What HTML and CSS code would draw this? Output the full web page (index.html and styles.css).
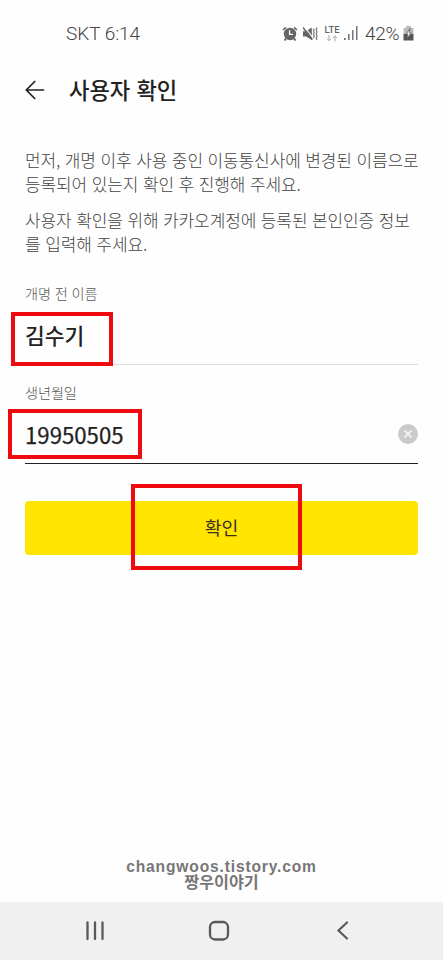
FILE: index.html
```html
<!DOCTYPE html>
<html lang="ko">
<head>
<meta charset="utf-8">
<meta name="viewport" content="width=device-width, initial-scale=1">
<title>사용자 확인</title>
<link rel="stylesheet" href="styles.css">
</head>
<body>
<div class="screen">
  <div class="status">
    <span class="carrier">SKT 6:14</span>
    <div class="indicators">
      <svg class="alarm" width="16" height="16" viewBox="0 0 16 16">
        <path d="M1 4 4 1.3M15 4 12 1.3" stroke="#666" stroke-width="1.6"/>
        <path d="M2.5 14.5 4 12.5M13.5 14.5 12 12.5" stroke="#666" stroke-width="2"/>
        <circle cx="8" cy="8" r="6.2" fill="#666"/>
        <path d="M7.6 4.3V8.4H11" fill="none" stroke="#fff" stroke-width="1.4"/>
      </svg>
      <svg class="mute" width="15" height="16" viewBox="0 0 15 16">
        <path d="M0 5.3H3L8.8 1.5V14L3 10.5H0Z" fill="#666"/>
        <path d="M1.6 1 10.5 12.6" stroke="#fff" stroke-width="1.2"/>
        <path d="M0 1.5 9.3 13.8" stroke="#666" stroke-width="1.6"/>
        <path d="M11.2 2.5 10.4 4.4 11.2 6.3 10.4 8.2 11.2 10.1 10.4 12M14 1.5 13.2 4 14 6 13.2 8 14 10 13.2 12 14 14" fill="none" stroke="#777" stroke-width="1.2"/>
      </svg>
      <div class="lte"><span>LTE</span>
        <svg width="12" height="7" viewBox="0 0 12 7" fill="none" stroke="#aaa" stroke-width="1"><path d="M3 0V5.5M1 3.5 3 5.7 5 3.5M9 6.5V1M7 3 9 .9 11 3"/></svg>
      </div>
      <svg class="signal" width="14" height="15" viewBox="0 0 14 15" fill="#777"><path d="M0 12h1.8v2H0zM4 8h1.6v6H4zM8 4h1.5v10H8zM12 0h1.5v14H12z"/></svg>
      <span class="percent">42%</span>
      <svg class="battery" width="11" height="15" viewBox="0 0 11 15"><path d="M3 0H8V2H10.5V8H.5V2H3Z" fill="#bbb"/><path d="M.5 8H10.5V14.5H.5Z" fill="#555"/><path d="M7 2.5 3 8.2H5L4 12.5 8.3 7H6.2Z" fill="#fff" stroke="#666" stroke-width=".9"/></svg>
    </div>
  </div>
  <header class="header">
    <svg width="20" height="20" viewBox="0 0 20 20" fill="none" stroke="#222" stroke-width="1.7"><path d="M19.2 10H1.5M10.2 1 1.3 10 10.2 19"/></svg>
    <h1>사용자 확인</h1>
  </header>
  <main class="content">
    <p>먼저, 개명 이후 사용 중인 이동통신사에 변경된 이름으로<br>등록되어 있는지 확인 후 진행해 주세요.</p>
    <p>사용자 확인을 위해 카카오계정에 등록된 본인인증 정보<br>를 입력해 주세요.</p>
    <div class="field">
      <div class="label">개명 전 이름</div>
      <div class="value"><span class="name">김수기</span><i class="mark mark-name"></i></div>
    </div>
    <div class="field active">
      <div class="label">생년월일</div>
      <div class="value"><span class="birth">19950505</span><i class="mark mark-birth"></i>
        <svg width="20" height="20" viewBox="0 0 20 20"><circle cx="10" cy="10" r="10" fill="#cacaca"/><path d="M6.5 6.5 13.5 13.5M13.5 6.5 6.5 13.5" stroke="#fff" stroke-width="1.3"/></svg>
      </div>
    </div>
    <div class="confirm"><span>확인</span><i class="mark mark-confirm"></i></div>
  </main>
  <div class="credit"><div class="site">changwoos.tistory.com</div><div class="author">짱우이야기</div></div>
  <nav class="navbar">
    <svg width="20" height="22" viewBox="0 0 20 22" stroke="#5a5a5a" stroke-width="2.3" stroke-linecap="round"><path d="M2.5 2.5V19M10 2.5V19M17.5 2.5V19"/></svg>
    <svg width="22" height="22" viewBox="0 0 22 22" fill="none" stroke="#5a5a5a" stroke-width="2.3"><rect x="2" y="2" width="18" height="17.5" rx="5"/></svg>
    <svg width="20" height="22" viewBox="0 0 20 22" fill="none" stroke="#5a5a5a" stroke-width="2.2" stroke-linecap="round"><path d="M14 2.5 5.5 10.5 14 18.5"/></svg>
  </nav>
</div>
</body>
</html>
```
FILE: styles.css
```css
* { box-sizing: border-box; }
body { margin: 0; background: #fefefe; font-family: "Noto Sans CJK KR", sans-serif; color: #222; }
svg { display: block; flex: none; }
.screen { height: 960px; display: flex; flex-direction: column; overflow: hidden; }
.status { height: 66px; padding: 1px 29px 0 66px; display: flex; justify-content: space-between; align-items: center; font-family: Roboto, sans-serif; font-size: 19px; font-weight: 300; color: #444; }
.carrier { letter-spacing: -.05px; }
.indicators { display: flex; align-items: center; }
.mute { margin-left: 5px; }
.lte { width: 16px; margin-left: 6px; display: flex; flex-direction: column; align-items: center; gap: 1px; font-size: 9.5px; line-height: 9px; font-weight: 500; color: #666; }
.signal { margin-left: 4px; }
.percent { width: 34px; margin-left: 7px; letter-spacing: -.3px; }
.battery { margin-left: 4px; }
.header { height: 48px; padding-left: 25px; display: flex; align-items: center; gap: 24px; }
.header h1 { margin: 0; padding-bottom: 3px; font-size: 22.2px; line-height: 32px; font-weight: 500; }
.content { padding: 34px 25px 0; }
.content p { margin: 0 0 12px; font-size: 17px; line-height: 24px; font-weight: 300; letter-spacing: -.12px; color: #444; white-space: nowrap; }
.field { height: 98px; border-bottom: 1px solid #dcdcdc; }
.content p + .field { margin-top: -1px; }
.label { padding-top: 17px; font-size: 14.2px; line-height: 20px; font-weight: 300; letter-spacing: -.1px; color: #555; }
.content p + .field .label { padding-top: 16px; }
.active { height: 99px; border-bottom-color: #222; }
.value { position: relative; height: 61px; display: flex; align-items: center; justify-content: space-between; font-weight: 500; }
.name { padding-top: 2px; font-size: 21.5px; }
.birth { padding-top: 2px; font-size: 22.2px; font-weight: 400; -webkit-text-stroke: .25px #222; }
.active .value svg { margin-top: 2px; }
.mark { position: absolute; border: 4px solid #ee0b10; }
.mark-name { left: -14px; top: 9px; width: 102px; height: 54px; }
.mark-birth { left: -17px; top: 7px; width: 134px; height: 50px; }
.confirm { position: relative; height: 54px; margin-top: 37px; padding-bottom: 3px; display: flex; align-items: center; justify-content: center; border-radius: 4px; background: #ffe500; color: #3a3020; font-size: 18.3px; }
.mark-confirm { left: 106px; top: -17px; width: 171px; height: 86px; }
.credit { margin-top: auto; height: 44px; text-align: center; color: #777; font-weight: 700; }
.site { font-family: "Liberation Sans", sans-serif; font-size: 15.6px; line-height: 17px; letter-spacing: .84px; }
.author { font-size: 16.2px; line-height: 13px; }
.navbar { height: 58px; padding: 0 90px 0 85px; display: flex; align-items: center; justify-content: space-between; background: #f0f0f0; }
```
